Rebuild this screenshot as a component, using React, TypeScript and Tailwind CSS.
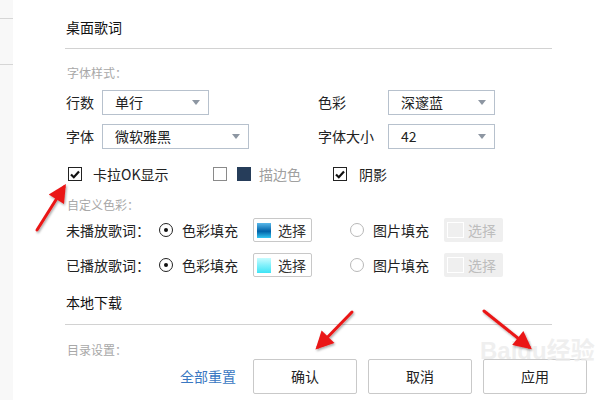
const FONT = "font-['Noto_Sans_CJK_SC','Noto_Sans',sans-serif]";

function Select({ value, width }: { value: string; width: string }) {
  return (
    <div
      className={`${width} h-[25px] flex items-center justify-between border border-[#b7c1cd] bg-white pl-[12px] pr-[8px] text-[14px] text-[#222]`}
    >
      <span>{value}</span>
      <svg width="8" height="5" viewBox="0 0 8 5">
        <path d="M0 0H8L4 5Z" fill="#8d96a2" />
      </svg>
    </div>
  );
}

function Check({ checked }: { checked: boolean }) {
  return checked ? (
    <div className="w-[14px] h-[14px] border border-[#222] bg-white flex items-center justify-center">
      <svg width="10" height="9" viewBox="0 0 10 9">
        <path d="M1 4.5L3.8 7.2L9 1.5" stroke="#111" strokeWidth="2.2" fill="none" />
      </svg>
    </div>
  ) : (
    <div className="w-[14px] h-[14px] border border-[#8a8a8a] bg-white" />
  );
}

function Radio({ on }: { on: boolean }) {
  return on ? (
    <div className="w-[14px] h-[14px] rounded-full border border-[#222] flex items-center justify-center">
      <div className="w-[4px] h-[4px] rounded-full bg-[#111]" />
    </div>
  ) : (
    <div className="w-[14px] h-[14px] rounded-full border border-[#b8b8b8]" />
  );
}

function ColorRow({ label, swatch }: { label: string; swatch: string }) {
  return (
    <div className="flex items-center h-[24px] text-[14px] text-[#222]">
      <span className="w-[93px]">{label}</span>
      <Radio on />
      <span className="ml-[9px] w-[71px]">色彩填充</span>
      <div className="w-[59px] h-[24px] border border-[#c8c8c8] rounded-[2px] flex items-center pl-[3px]">
        <div className={`w-[14px] h-[15px] ${swatch}`} />
        <span className="ml-[7px] text-[#333]">选择</span>
      </div>
      <div className="ml-[38px]">
        <Radio on={false} />
      </div>
      <span className="ml-[9px] w-[71px]">图片填充</span>
      <div className="w-[59px] h-[24px] bg-[#efefef] rounded-[2px] flex items-center pl-[3px]">
        <div className="w-[17px] h-[16px] border border-white bg-[#efefef]" />
        <span className="ml-[4px] text-[#bdbdbd]">选择</span>
      </div>
    </div>
  );
}

function Btn({ text }: { text: string }) {
  return (
    <div className="w-[104px] h-[35px] border border-[#c9c9c9] rounded-[2px] bg-white flex items-center justify-center text-[14px] text-[#222]">
      {text}
    </div>
  );
}

export default function App() {
  return (
    <div className={`relative w-[600px] h-[400px] overflow-hidden bg-white flex ${FONT}`}>
      <div className="w-[13px] h-full bg-[#f8f8f8] flex flex-col">
        <div className="h-[18px]" />
        <div className="h-px bg-[#d6d6d6]" />
        <div className="h-[45px]" />
        <div className="h-px bg-[#d6d6d6]" />
      </div>

      <div className="ml-[52px] flex flex-col">
        <div className="mt-[17px] h-[20px] flex items-center pl-[1px] text-[14px] text-[#111]">桌面歌词</div>
        <div className="mt-[11px] w-[487px] h-px bg-[#d2d2d2]" />

        <div className="mt-[16px] h-[16px] flex items-center pl-[2px] text-[12px] text-[#a8a8a8]">字体样式：</div>

        <div className="mt-[9px] h-[25px] flex items-center pl-[1px] text-[14px] text-[#222]">
          <div className="w-[252px] flex items-center">
            <span className="w-[36px]">行数</span>
            <Select value="单行" width="w-[107px]" />
          </div>
          <span className="w-[70px]">色彩</span>
          <Select value="深邃蓝" width="w-[107px]" />
        </div>

        <div className="mt-[9px] h-[25px] flex items-center pl-[1px] text-[14px] text-[#222]">
          <div className="w-[252px] flex items-center">
            <span className="w-[36px]">字体</span>
            <Select value="微软雅黑" width="w-[147px]" />
          </div>
          <span className="w-[70px]">字体大小</span>
          <Select value="42" width="w-[107px]" />
        </div>

        <div className="mt-[18px] h-[14px] flex items-center pl-[3px] text-[14px]">
          <div className="w-[145px] flex items-center">
            <Check checked />
            <span className="ml-[11px] text-[#222]">卡拉OK显示</span>
          </div>
          <div className="w-[120px] flex items-center">
            <Check checked={false} />
            <div className="ml-[10px] w-[14px] h-[14px] bg-[#263d5a]" />
            <span className="ml-[8px] text-[#a0a0a0]">描边色</span>
          </div>
          <Check checked />
          <span className="ml-[12px] text-[#222]">阴影</span>
        </div>

        <div className="mt-[16px] h-[16px] flex items-center pl-[2px] text-[12px] text-[#a8a8a8]">自定义色彩：</div>

        <div className="mt-[5px] pl-[1px]">
          <ColorRow label="未播放歌词：" swatch="bg-[linear-gradient(#58b8ea,#0062a8_55%,#34c6f2)]" />
        </div>
        <div className="mt-[11px] pl-[1px]">
          <ColorRow label="已播放歌词：" swatch="bg-[linear-gradient(#c8fcff,#7ff0fb_50%,#3fe4f5)]" />
        </div>

        <div className="mt-[15px] h-[20px] flex items-center pl-[1px] text-[14px] text-[#111]">本地下载</div>
        <div className="mt-[12px] w-[487px] h-px bg-[#d2d2d2]" />

        <div className="mt-[17px] h-[16px] flex items-center pl-[2px] text-[12px] text-[#a8a8a8]">目录设置：</div>

        <div className="mt-px h-[35px] flex items-center">
          <span className="ml-[115px] w-[73px] text-[14px] text-[#3a78c2]">全部重置</span>
          <Btn text="确认" />
          <div className="ml-[11px]">
            <Btn text="取消" />
          </div>
          <div className="ml-[11px]">
            <Btn text="应用" />
          </div>
        </div>
      </div>

      <div className="absolute left-[480px] top-[338px] whitespace-nowrap text-[24px] leading-[26px] font-bold text-[#ebebeb]/80 font-['Liberation_Sans','Noto_Sans_CJK_SC',sans-serif] pointer-events-none">
        Baidu经验
      </div>

      <svg className="absolute inset-0 pointer-events-none" width="600" height="400" viewBox="0 0 600 400">
        <defs>
          <marker id="ah" viewBox="0 0 10 10" refX="8" refY="5" markerWidth="7" markerHeight="6" orient="auto" markerUnits="strokeWidth">
            <path d="M0 0L10 5L0 10Z" fill="#ea1616" />
          </marker>
          <filter id="sh" x="-20%" y="-20%" width="140%" height="140%">
            <feDropShadow dx="1" dy="1.5" stdDeviation="1.2" floodColor="#000" floodOpacity="0.35" />
          </filter>
        </defs>
        <g filter="url(#sh)" stroke="#ea1616" strokeWidth="3" strokeLinecap="round" markerEnd="url(#ah)">
          <line x1="37" y1="230" x2="64" y2="187" />
          <line x1="352" y1="312" x2="318" y2="347" />
          <line x1="484" y1="311" x2="529" y2="347" />
        </g>
      </svg>
    </div>
  );
}
